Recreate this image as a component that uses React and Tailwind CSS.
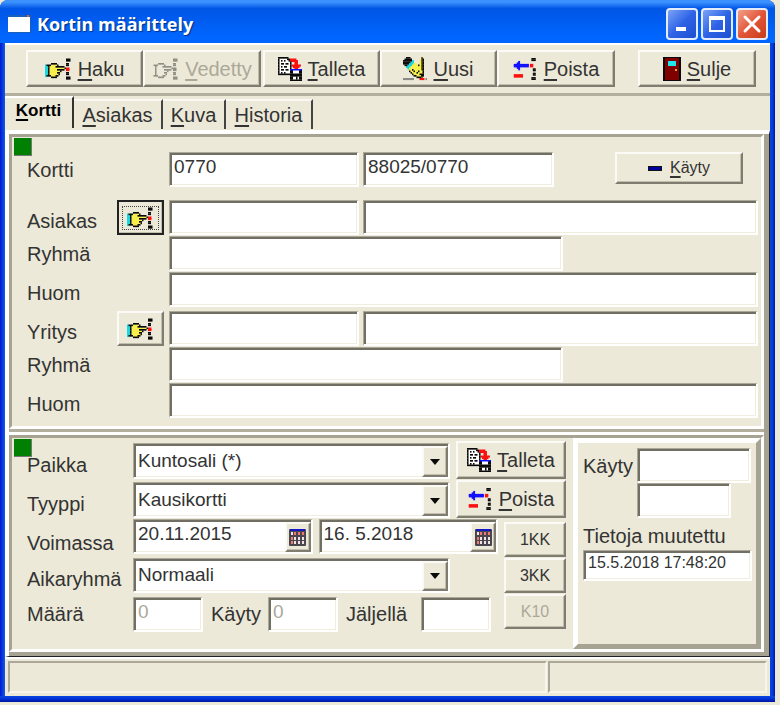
import React, { useId } from "react";

const SUNKEN =
  "border-t border-l border-r-2 border-b-2 border-t-[#aca899] border-l-[#aca899] border-r-white border-b-white shadow-[inset_2px_2px_0_#716f64,inset_-1px_-1px_0_#f1eee0] bg-white";
const RAISED =
  "border-2 border-t-[#fbfaf6] border-l-[#fbfaf6] border-r-[#807d70] border-b-[#807d70] shadow-[inset_-1px_-1px_0_#c2beae] bg-[#ece9d8]";

const PALETTE = {
  K: "#0a0a0a",
  Y: "#f8f04a",
  C: "#18d8e0",
  R: "#fb1010",
  W: "#ffffff",
  B: "#1010ff",
  G: "#8a8a86",
  O: "#6b6410",
};

/* Each row becomes runs of one colour; light colours go first so dark outlines stay crisp on top. */
function PixelIcon({ rows, width, height, mono }) {
  const runs = [];
  rows.forEach((row, y) => {
    for (const m of row.matchAll(/([A-Z])\1*/g)) {
      const c = m[1];
      if (mono && (c === "Y" || c === "C")) continue;
      runs.push({ c, x: m.index, y, w: m[0].length });
    }
  });
  runs.sort((a, b) => (a.c === "K") - (b.c === "K"));
  return (
    <svg
      width={width}
      height={height}
      viewBox={`0 0 ${rows[0].length} ${rows.length}`}
      className="shrink-0"
      aria-hidden="true"
    >
      {runs.map(({ c, x, y, w }) => (
        <rect
          key={`${x}-${y}`}
          x={x}
          y={y}
          width={w + (c === "K" ? 0 : 0.3)}
          height={c === "K" ? 1.1 : 1.4}
          fill={mono ? "#918f84" : PALETTE[c]}
        />
      ))}
    </svg>
  );
}

const HAND = [
  "..............KKK.",
  "..............KKK.",
  "..................",
  "....KKKK......KK..",
  "CKKKYYYYK.....KK..",
  "CCKYYYYKKKKKK.....",
  "CCKYYYYYYYYYYKRR..",
  "CCKYYYYYKKKKK.RR..",
  "CCKYYYYYYYK.......",
  "CCKYYYYYKK....KK..",
  "CCKYYYYYYK....KK..",
  "CKKKYYYKK.........",
  "....KKKK......KKK.",
  "..............KKK.",
];
const SAVE = [
  "KKKKKKK.........",
  "KWWWWWKKRRRR....",
  "KWKWKWWKRRRRR...",
  "KWWWWWWWK..RR...",
  "KWKKWKKWK..RR...",
  "KWWWWWWWKRRRRRR.",
  "KWKWKKWWK.RRRR..",
  "KWWWWWWWK..RR...",
  "KWKKWKKWBBBBBBBB",
  "KWWWWWWWKKWWWWKK",
  "KWKWKWWWKKWWWWKK",
  "KKKKKKKKKKKKKKKK",
  "........KKKKKKKK",
  "........KKWWKWKK",
  "........KKWWKWKK",
  "........KKKKKKKK",
];
const NEW = [
  "..KKK.......O...",
  ".KKKKK......OK..",
  "KKKKKKC....YOK..",
  "KKKKKCC....YOK..",
  "KKKKCCCYY..YOK..",
  ".KKCCCYYYYKYOK..",
  "..CCCYYYYYYYOK..",
  "...CYYYYYYYYOK..",
  "....YYKYYYYYOK..",
  "....KYYKYYKYYK..",
  ".....KYYYKYYYK..",
  "......KYYYYKKK..",
  ".......KKYYYKK..",
  ".........KKKO...",
  "GGGGGGG....RRR.G",
  "................",
];
const REMOVE = [
  "............KKK.",
  "............KKK.",
  "...B............",
  "..BB............",
  "BBBBBBBBBB.RR...",
  "BBBBBBBBBB.RR...",
  "..BB............",
  "...B.........KK.",
  ".............KK.",
  "................",
  ".............KK.",
  "RRRRRR.......KK.",
  "RRRRRR..........",
  "............KKK.",
  "............KKK.",
];

const HandIcon = ({ mono }) => <PixelIcon rows={HAND} width={27} height={22} mono={mono} />;
const SaveIcon = () => <PixelIcon rows={SAVE} width={24} height={24} />;
const NewIcon = () => <PixelIcon rows={NEW} width={24} height={24} />;
const RemoveIcon = () => <PixelIcon rows={REMOVE} width={25} height={22} />;
const DoorIcon = () => (
  <svg width="18" height="24" viewBox="0 0 18 24" className="shrink-0" aria-hidden="true">
    <rect width="18" height="24" fill="#0a0a0a" />
    <rect x="2" y="1" width="14" height="22" fill="#800000" />
    <rect x="5" y="4" width="8" height="5" fill="#20e8f0" />
    <rect x="12" y="12" width="2" height="2" fill="#d8b020" />
  </svg>
);
const CalendarIcon = () => (
  <svg width="17" height="17" viewBox="0 0 17 17" aria-hidden="true">
    <rect width="17" height="17" rx="1" fill="#4a4650" />
    <rect x="1" width="15" height="2" fill="#1515c8" />
    {[3, 8, 12].map((y) =>
      [2, 5, 9, 13].map((x) => (
        <rect key={`${x}-${y}`} x={x} y={y} width="2" height="3" fill={(x + y) % 2 ? "#f3e4e4" : "#f07a70"} />
      ))
    )}
  </svg>
);

function Mnemonic({ text }) {
  return (
    <span>
      <span className="underline decoration-2 underline-offset-3">{text[0]}</span>
      {text.slice(1)}
    </span>
  );
}

function ToolButton({ icon, text, className = "", disabled = false }) {
  return (
    <button
      type="button"
      disabled={disabled}
      className={`flex items-center justify-center gap-1.5 text-[20px] leading-6 ${RAISED} ${
        disabled ? "text-[#aca899]" : "text-[#333]"
      } ${className}`}
    >
      {icon}
      <Mnemonic text={text} />
    </button>
  );
}

function Field({ label, className = "", ...rest }) {
  return (
    <input
      type="text"
      aria-label={label}
      className={`min-w-0 rounded-none pl-1 outline-none text-[19px] leading-6 text-[#333] disabled:text-[#aca899] ${SUNKEN} ${className}`}
      {...rest}
    />
  );
}

function CardField(props) {
  return <Field {...props} className={`h-[35px] pb-1 ${props.className}`} />;
}

function CustomerRows({ title, focused }) {
  const id = useId();
  const low = "w-[90px] self-end leading-7";
  return (
    <div className="flex flex-col gap-px">
      <div className="flex h-[35px]">
        <label htmlFor={`${id}a`} className={low}>{title}</label>
        <button
          type="button"
          aria-label={`Hae ${title}`}
          className={`mr-[5px] flex w-[47px] items-center justify-center ${RAISED} ${
            focused ? "outline-2 -outline-offset-2 outline-[#222]" : ""
          }`}
        >
          {focused ? (
            <span className="flex h-[24px] items-center border border-dotted border-[#444] px-1">
              <HandIcon />
            </span>
          ) : (
            <HandIcon />
          )}
        </button>
        <CardField id={`${id}a`} className="mr-1 w-[190px]" label={title} />
        <CardField className="flex-1" label={`${title} nimi`} />
      </div>
      <div className="flex h-[35px]">
        <label htmlFor={`${id}b`} className="w-[142px] self-center leading-7">Ryhmä</label>
        <CardField id={`${id}b`} className="w-[394px]" label="Ryhmä" />
      </div>
      <div className="flex h-[35px]">
        <label htmlFor={`${id}c`} className="w-[142px] self-end leading-7">Huom</label>
        <CardField id={`${id}c`} className="flex-1" label="Huom" />
      </div>
    </div>
  );
}

function Choice({ id, value, className = "" }) {
  return (
    <div className={`relative flex min-w-0 flex-1 ${SUNKEN} ${className}`}>
      <select
        id={id}
        defaultValue={value}
        className="w-full appearance-none bg-transparent pl-1 text-[19px] leading-6 text-[#333] outline-none"
      >
        <option>{value}</option>
      </select>
      <span
        className={`pointer-events-none absolute top-[2px] right-0 bottom-0 flex w-[26px] items-center justify-center ${RAISED}`}
      >
        <svg width="10" height="6" viewBox="0 0 10 6" aria-hidden="true">
          <path d="M0 0H10L5 6Z" fill="#0a0a0a" />
        </svg>
      </span>
    </div>
  );
}

function DateField({ id, value, label }) {
  return (
    <div className={`flex h-[35px] min-w-0 flex-1 ${SUNKEN}`}>
      <input
        id={id}
        type="text"
        defaultValue={value}
        aria-label={label}
        className="min-w-0 flex-1 bg-transparent pb-1 pl-1 text-[19px] leading-6 text-[#333] outline-none"
      />
      <button
        type="button"
        aria-label={`${label} kalenteri`}
        className={`mt-[2px] flex w-[26px] items-center justify-center ${RAISED}`}
      >
        <CalendarIcon />
      </button>
    </div>
  );
}

function CaptionButton({ label, danger, children }) {
  return (
    <button
      type="button"
      aria-label={label}
      className={`flex size-8 items-center justify-center rounded-[4px] border-2 border-[#e4ecfb] bg-linear-to-br ${
        danger ? "from-[#f0a088] via-[#e2553a] to-[#c93c12]" : "from-[#7ba2f5] via-[#2f63e6] to-[#1c50d0]"
      }`}
    >
      <svg width="20" height="20" viewBox="0 0 20 20" aria-hidden="true">{children}</svg>
    </button>
  );
}

const Lamp = () => (
  <span className="absolute top-px left-[2px] size-[18px] border-r border-b border-[#777] bg-[#008000]" />
);

const GROUP =
  "relative border-3 border-t-[#a7a393] border-l-[#a7a393] border-r-white border-b-white";

export default function App() {
  return (
    <div className="bg-[#ece9d8] pr-[5px] pb-[3px] font-['Liberation_Sans',Arial,sans-serif] text-[20px] text-[#333]">
      <div className="overflow-hidden rounded-t-lg bg-[linear-gradient(to_top,#001399_0,#0030d8_3px,#0a48e0_6px,transparent_6px),linear-gradient(to_right,#0019cf_0,#0831d9_2px,#0f5cee_5px,#0a48e0_calc(100%-5px),#0038dd_calc(100%-2px),#001399_100%)]">
        <header className="flex h-[43px] items-center bg-linear-to-b from-[#3c92ff] from-5% via-[#0055e5] via-20% to-[#0066ff] to-85% pt-1 pr-[7px] pl-2">
          <svg width="23" height="18" viewBox="0 0 23 18" aria-hidden="true">
            <rect width="23" height="18" fill="#1b5fb8" />
            <rect y="2" width="22" height="15" fill="#fff" />
            <rect x="19" width="2" height="2" fill="#e06030" />
          </svg>
          <h1 className="flex-1 pl-1.5 font-['Open_Sans','Noto_Sans',sans-serif] text-[18px] leading-6 font-bold text-white [text-shadow:1px_1px_1px_#003088]">
            Kortin määrittely
          </h1>
          <div className="flex gap-[3px]">
            <CaptionButton label="Pienennä">
              <rect x="4" y="13" width="10" height="4" fill="#fff" />
            </CaptionButton>
            <CaptionButton label="Suurenna">
              <path d="M2 2H18V18H2ZM4 6V16H16V6Z" fill="#fff" fillRule="evenodd" />
            </CaptionButton>
            <CaptionButton label="Sulje" danger>
              <path d="M3 3L17 17M17 3L3 17" stroke="#fff" strokeWidth="3" strokeLinecap="round" />
            </CaptionButton>
          </div>
        </header>

        <div className="mx-[5px] mb-[6px] bg-[#ece9d8]">
          <div className="flex h-[53px] border-t-2 border-b-3 border-t-white border-b-[#b3af9f] px-[14px] pt-[5px] pb-[6px] pl-[21px]">
            <ToolButton className="w-[117px]" icon={<HandIcon />} text="Haku" />
            <ToolButton className="mr-[2px] w-[118px]" icon={<HandIcon mono />} text="Vedetty" disabled />
            <ToolButton className="w-[117px]" icon={<SaveIcon />} text="Talleta" />
            <ToolButton className="w-[117px]" icon={<NewIcon />} text="Uusi" />
            <ToolButton className="w-[118px]" icon={<RemoveIcon />} text="Poista" />
            <ToolButton className="ml-auto w-[118px]" icon={<DoorIcon />} text="Sulje" />
          </div>

          <div role="tablist" className="flex h-[34px] items-end">
            <button
              type="button"
              role="tab"
              aria-selected="true"
              className="h-8 w-[69px] self-start border-t-2 border-r-2 border-t-white border-r-[#333] pb-1 text-[17px] leading-5 font-bold text-black"
            >
              <Mnemonic text="Kortti" />
            </button>
            {[
              ["Asiakas", "w-[89px]"],
              ["Kuva", "w-[63px]"],
              ["Historia", "w-[87px]"],
            ].map(([name, width]) => (
              <button
                key={name}
                type="button"
                role="tab"
                aria-selected="false"
                className={`mb-px h-[30px] border-t-2 border-r-2 border-t-[#faf8f0] border-r-[#444] text-[20px] leading-6 ${width}`}
              >
                <Mnemonic text={name} />
              </button>
            ))}
          </div>

          <main className="border-t-4 border-r border-b border-l-4 border-t-white border-r-[#222] border-b-[#222] border-l-white">
            <div className="border-r-5 border-b-4 border-[#a7a393]">
              <section className={`${GROUP} pt-[15px] pr-[3px] pb-2 pl-[15px]`}>
                <Lamp />
                <div className="mb-[13px] flex h-[35px]">
                  <label htmlFor="card" className="w-[142px] self-center leading-7">Kortti</label>
                  <CardField id="card" className="mr-1 w-[190px]" label="Kortti" defaultValue="0770" />
                  <CardField className="w-[191px]" label="Kortin koodi" defaultValue="88025/0770" />
                  <button
                    type="button"
                    className={`mr-[15px] ml-auto flex h-8 w-[128px] items-center justify-center gap-2 text-[16px] leading-5 ${RAISED}`}
                  >
                    <span className="h-[5px] w-[14px] border border-[#111] bg-[#0000a0]" />
                    <Mnemonic text="Käyty" />
                  </button>
                </div>
                <div className="flex flex-col gap-1">
                  <CustomerRows title="Asiakas" focused />
                  <CustomerRows title="Yritys" />
                </div>
              </section>

              <div className="h-[6px] border-t-3 border-b-3 border-t-[#b3af9f] border-b-white" />

              <section className={`${GROUP} flex`}>
                <Lamp />
                <div className="relative flex min-w-0 flex-1 flex-col gap-px pt-[3px] pb-[15px] pl-[15px]">
                  <div className="flex h-[38px] items-end">
                    <label htmlFor="place" className="w-[106px] leading-7">Paikka</label>
                    <Choice id="place" value="Kuntosali (*)" className="h-9" />
                    <ToolButton className="ml-[6px] h-[38px] w-[110px]" icon={<SaveIcon />} text="Talleta" />
                  </div>
                  <div className="flex h-[38px] items-end">
                    <label htmlFor="type" className="w-[106px] leading-7">Tyyppi</label>
                    <Choice id="type" value="Kausikortti" className="h-9" />
                    <ToolButton className="ml-[6px] h-[38px] w-[110px]" icon={<RemoveIcon />} text="Poista" />
                  </div>
                  <div className="flex h-[38px]">
                    <label htmlFor="from" className="w-[106px] self-end leading-7">Voimassa</label>
                    <div className="flex min-w-0 flex-1 gap-[6px]">
                      <DateField id="from" value="20.11.2015" label="Voimassa alkaen" />
                      <DateField value="16. 5.2018" label="Voimassa asti" />
                    </div>
                    <button type="button" className={`ml-[6px] h-[35px] w-[62px] self-end text-[16px] leading-5 ${RAISED}`}>
                      1KK
                    </button>
                  </div>
                  <div className="flex h-[35px] items-end">
                    <label htmlFor="period" className="w-[106px] leading-7">Aikaryhmä</label>
                    <Choice id="period" value="Normaali" className="h-[35px]" />
                    <button type="button" className={`ml-[54px] h-[35px] w-[62px] text-[16px] leading-5 ${RAISED}`}>
                      3KK
                    </button>
                  </div>
                  <div className="flex h-10 items-center">
                    <label htmlFor="amount" className="w-[106px] leading-7">Määrä</label>
                    <CardField id="amount" className="w-[70px]" label="Määrä" defaultValue="0" disabled />
                    <label htmlFor="used" className="w-[65px] pl-2 leading-7">Käyty</label>
                    <CardField id="used" className="w-[70px]" label="Käyty" defaultValue="0" disabled />
                    <label htmlFor="left" className="w-[83px] pl-2 leading-7">Jäljellä</label>
                    <CardField id="left" className="w-[70px]" label="Jäljellä" />
                    <button
                      type="button"
                      disabled
                      className={`ml-auto h-[35px] w-[62px] self-start text-[16px] leading-5 text-[#aca899] ${RAISED}`}
                    >
                      K10
                    </button>
                  </div>
                </div>

                <div className="ml-[7px] w-[188px] border-5 border-t-white border-r-[#a7a393] border-b-[#a7a393] border-l-white pt-[5px] pl-[5px]">
                  <div className="flex items-center">
                    <label htmlFor="visits" className="w-[54px] leading-7">Käyty</label>
                    <CardField id="visits" className="w-[114px]" label="Käyty" />
                  </div>
                  <CardField className="ml-[54px] block w-[94px]" label="Käyty yhteensä" />
                  <label htmlFor="changed" className="block pt-1 text-[20px] leading-7">Tietoja muutettu</label>
                  <input
                    id="changed"
                    type="text"
                    defaultValue="15.5.2018 17:48:20"
                    className={`block h-[31px] w-[169px] pb-1 pl-1 text-[16px] leading-5 outline-none ${SUNKEN}`}
                  />
                </div>
              </section>
            </div>
          </main>

          <footer className="flex h-[39px] gap-px border-t-2 border-t-white px-[3px] pt-[2px] pb-[3px]">
            <div className="flex-1 border-2 border-t-[#aca899] border-r-[#f8f6ec] border-b-[#f8f6ec] border-l-[#aca899]" />
            <div className="w-[219px] border-2 border-t-[#aca899] border-r-[#f8f6ec] border-b-[#f8f6ec] border-l-[#aca899]" />
          </footer>
        </div>
      </div>
    </div>
  );
}
